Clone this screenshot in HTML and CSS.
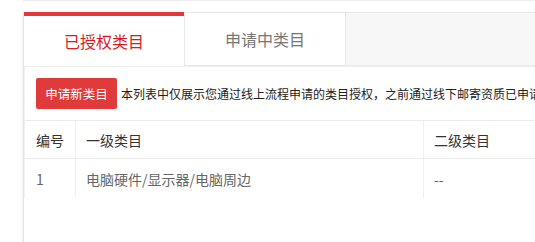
FILE: index.html
```html
<!DOCTYPE html>
<html lang="zh-CN">
<head>
<meta charset="utf-8">
<link rel="stylesheet" href="styles.css">
</head>
<body>
<div class="topline"></div>
<div class="wrap">
  <div class="tabs">
    <div class="tab active">已授权类目</div>
    <div class="tab">申请中类目</div>
    <div class="tab-rest"></div>
  </div>
  <div class="panel">
    <div class="toolbar">
      <button class="btn">申请新类目</button>
      <span class="desc">本列表中仅展示您通过线上流程申请的类目授权，之前通过线下邮寄资质已申请</span>
    </div>
    <div class="table">
      <div class="row head">
        <div class="cell c1">编号</div>
        <div class="cell c2">一级类目</div>
        <div class="cell c3">二级类目</div>
      </div>
      <div class="row body">
        <div class="cell c1">1</div>
        <div class="cell c2">电脑硬件/显示器/电脑周边</div>
        <div class="cell c3">--</div>
      </div>
    </div>
  </div>
</div>
</body>
</html>
```
FILE: styles.css
```css
html, body {
  margin: 0;
  padding: 0;
  background: #fff;
  overflow: hidden;
  font-family: "Noto Sans CJK SC", "Noto Sans", sans-serif;
}
.topline {
  margin-left: 23px;
  height: 1px;
  background: #ededed;
}
.wrap {
  margin-left: 23px;
  margin-top: 11px;
  width: 1100px;
  border-left: 1px solid #e6e6e6;
  box-shadow: -1px 0 2px rgba(0, 0, 0, 0.06);
  min-height: 240px;
}
.tabs {
  display: flex;
  height: 54px;
}
.tab {
  box-sizing: border-box;
  width: 162px;
  height: 54px;
  display: flex;
  align-items: center;
  justify-content: center;
  font-size: 16px;
  color: #777;
  background: #fff;
  border: 1px solid #e8e8e8;
}
.tab.active {
  width: 160px;
  border: none;
  border-top: 4px solid #e23a3a;
  color: #d9191f;
}
.tab-rest {
  flex: 1;
  box-sizing: border-box;
  height: 54px;
  background: #f7f7f7;
  border-top: 1px solid #e8e8e8;
  border-bottom: 1px solid #ebebeb;
}
.panel {
  border-top: 1px solid #efefef;
  border-left: 1px solid #f2f2f2;
}
.toolbar {
  display: flex;
  align-items: center;
  gap: 4px;
  padding: 11px 0 11px 11px;
  white-space: nowrap;
}
.btn {
  width: 81px;
  height: 31px;
  border: none;
  border-radius: 2px;
  background: #e13a3a;
  color: #fff;
  font-family: inherit;
  font-size: 12.5px;
  padding: 0;
}
.desc {
  font-size: 12px;
  color: #222;
}
.table {
  border-top: 1px solid #ececec;
}
.row {
  display: flex;
}
.row.head {
  height: 37px;
  border-bottom: 1px solid #ececec;
}
.row.body {
  height: 39px;
}
.cell {
  box-sizing: border-box;
  display: flex;
  align-items: center;
  font-size: 14px;
  white-space: nowrap;
}
.head .cell {
  color: #333;
}
.body .cell {
  color: #666;
}
.c1 {
  width: 50px;
  padding-left: 11px;
}
.c2 {
  width: 348px;
  padding-left: 10px;
  border-left: 1px solid #efefef;
}
.c3 {
  width: 300px;
  padding-left: 10px;
  border-left: 1px solid #efefef;
}
```
